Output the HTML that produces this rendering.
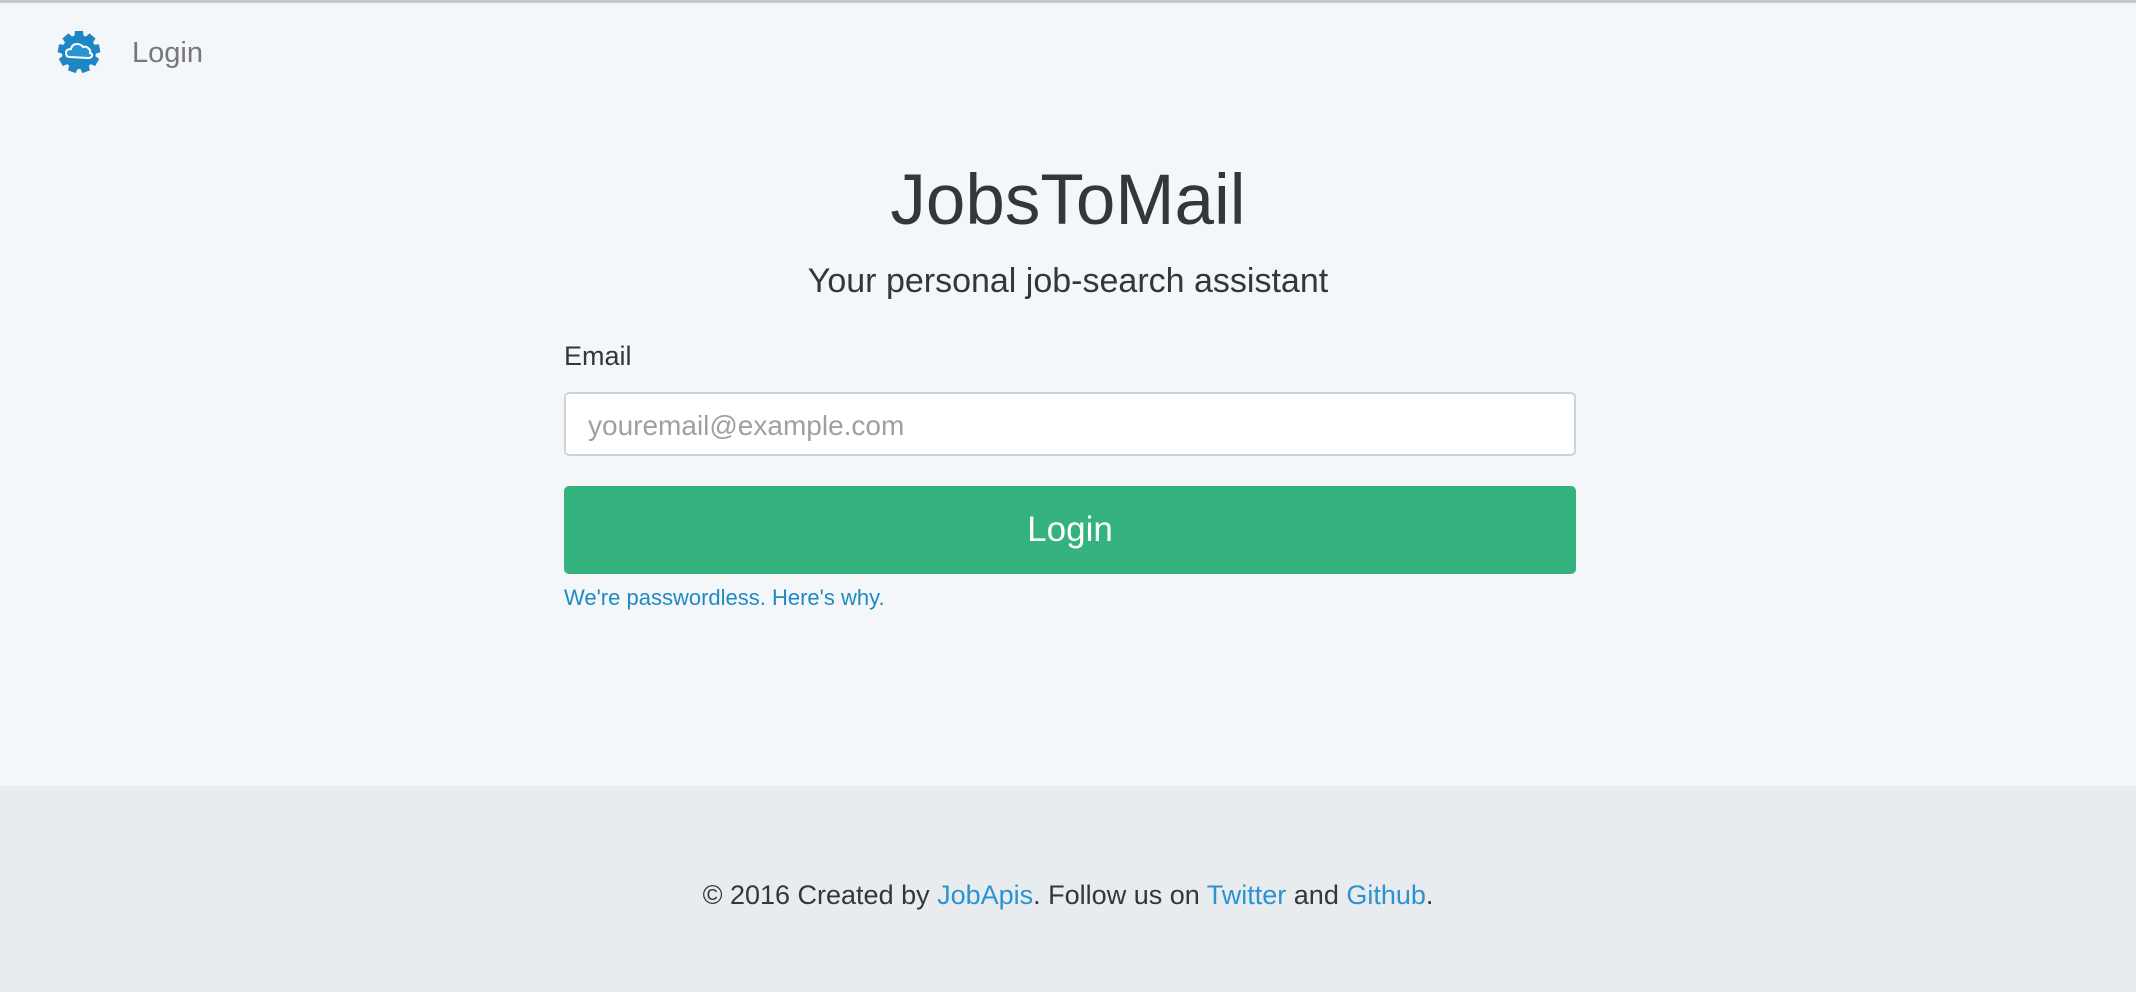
<!DOCTYPE html>
<html><head><meta charset="utf-8"><style>
*{box-sizing:border-box;margin:0;padding:0}
body{width:2136px;height:992px;overflow:hidden;font-family:"Liberation Sans",sans-serif;background:#f4f7fa;color:#33373b;position:relative}
.top{position:absolute;top:0;left:0;width:2136px;height:3px;background:#c8c8c8}
.nav{position:absolute;left:132px;top:37px;font-size:29px;color:#777}
.gear{position:absolute;left:56px;top:29px}
h1{position:absolute;left:0;width:2136px;top:160px;text-align:center;font-weight:normal;font-size:71px;color:#33373b}
.sub{position:absolute;left:0;width:2136px;top:262px;text-align:center;font-size:34px}
.lbl{position:absolute;left:564px;top:341px;font-size:27px}
.inp{position:absolute;left:564px;top:392px;width:1012px;height:64px;background:#fff;border:2px solid #cfd3d7;border-radius:5px;font-size:28px;color:#a0a0a0;padding:16px 0 0 22px}
.btn{position:absolute;left:564px;top:486px;width:1012px;height:88px;background:#35b37e;border-radius:5px;color:#fff;font-size:35px;text-align:center;line-height:88px}
.why{position:absolute;left:564px;top:585px;font-size:22px;color:#1f8ac2}
.foot{position:absolute;left:0;top:786px;width:2136px;height:206px;background:#e8ecef}
.ft{position:absolute;left:0;width:2136px;top:880px;text-align:center;font-size:27px;color:#33373b}
.ft a{color:#2b93d1;text-decoration:none}
</style></head><body>
<div class="top"></div>
<svg class="gear" width="46" height="46" viewBox="0 0 46 46">
<g fill="#1f86c4">
<circle cx="23" cy="23" r="17"/>
<g id="t"><path d="M19 2 h8 l1 8 h-10 z"/></g>
<use href="#t" transform="rotate(40 23 23)"/><use href="#t" transform="rotate(80 23 23)"/><use href="#t" transform="rotate(120 23 23)"/><use href="#t" transform="rotate(160 23 23)"/><use href="#t" transform="rotate(200 23 23)"/><use href="#t" transform="rotate(240 23 23)"/><use href="#t" transform="rotate(280 23 23)"/><use href="#t" transform="rotate(320 23 23)"/>
</g>
<path d="M14 28 q-4 0 -4 -4 q0 -4 5 -4 q1 -5 6 -5 q4 0 6 3 q3 -1 5 1 q3 2 2 5 q3 1 2 3 q-1 2 -4 2 z" fill="#2a95d3" stroke="#fff" stroke-width="2"/>
</svg>
<div class="nav">Login</div>
<h1>JobsToMail</h1>
<div class="sub">Your personal job-search assistant</div>
<div class="lbl">Email</div>
<div class="inp">youremail@example.com</div>
<div class="btn">Login</div>
<div class="why">We're passwordless. Here's why.</div>
<div class="foot"></div>
<div class="ft">© 2016 Created by <a>JobApis</a>. Follow us on <a>Twitter</a> and <a>Github</a>.</div>
</body></html>
